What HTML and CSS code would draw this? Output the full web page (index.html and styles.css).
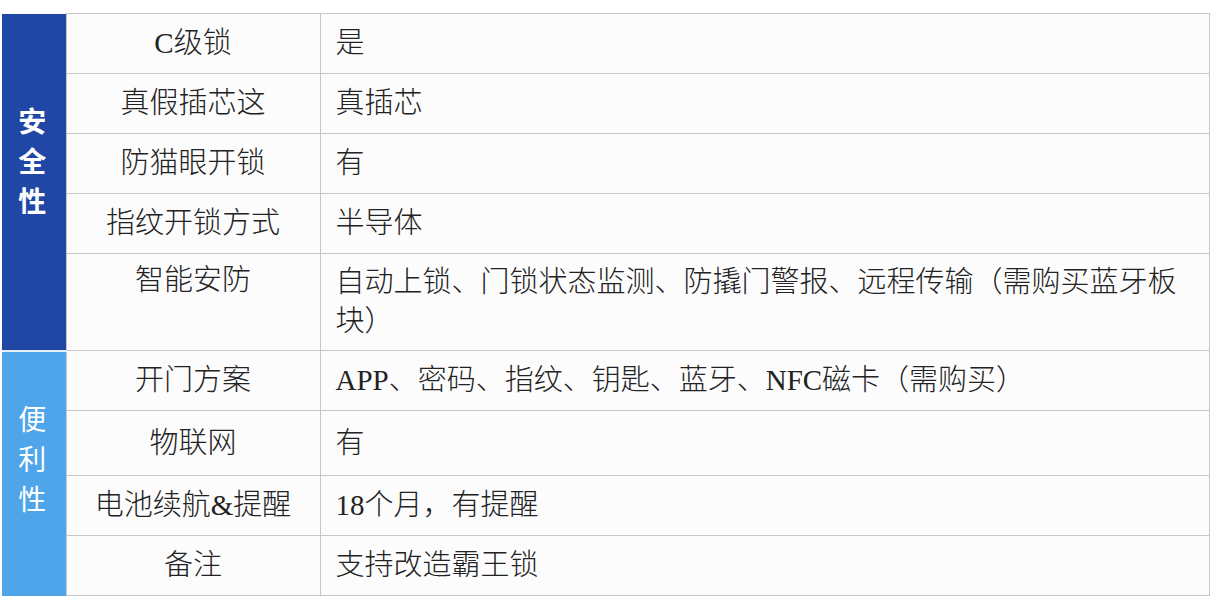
FILE: index.html
```html
<!DOCTYPE html>
<html lang="zh-CN">
<head>
<meta charset="utf-8">
<link rel="stylesheet" href="styles.css">
<title>智能锁参数</title>
</head>
<body>
<table class="spec">
  <colgroup>
    <col class="c-cat">
    <col class="c-label">
    <col class="c-value">
  </colgroup>
  <tbody>
    <tr class="row">
      <td class="cat cat-safe" rowspan="5"><span class="cat-text">安<br>全<br>性</span></td>
      <td class="label">C级锁</td>
      <td class="value">是</td>
    </tr>
    <tr class="row">
      <td class="label">真假插芯这</td>
      <td class="value">真插芯</td>
    </tr>
    <tr class="row">
      <td class="label">防猫眼开锁</td>
      <td class="value">有</td>
    </tr>
    <tr class="row">
      <td class="label">指纹开锁方式</td>
      <td class="value">半导体</td>
    </tr>
    <tr class="row row-tall">
      <td class="label label-top">智能安防</td>
      <td class="value">自动上锁、门锁状态监测、防撬门警报、远程传输（需购买蓝牙板块）</td>
    </tr>
    <tr class="row">
      <td class="cat cat-easy" rowspan="5"><span class="cat-text">便<br>利<br>性</span></td>
      <td class="label">开门方案</td>
      <td class="value">APP、密码、指纹、钥匙、蓝牙、NFC磁卡（需购买）</td>
    </tr>
    <tr class="row row-64">
      <td class="label">物联网</td>
      <td class="value">有</td>
    </tr>
    <tr class="row">
      <td class="label">电池续航&amp;提醒</td>
      <td class="value">18个月，有提醒</td>
    </tr>
    <tr class="row">
      <td class="label">备注</td>
      <td class="value">支持改造霸王锁</td>
    </tr>
  </tbody>
</table>
</body>
</html>
```

FILE: styles.css
```css
html, body {
  background: #ffffff;
}
body {
  margin: 13px 0 0 2px;
  font-family: "Liberation Serif", "Noto Sans CJK SC", serif;
  color: #222;
}
.spec {
  border-collapse: collapse;
  width: 1207px;
  table-layout: fixed;
  background: #fcfcfd;
}
.c-cat { width: 64px; }
.c-label { width: 254px; }
.c-value { width: 889px; }

.row { height: 60px; }
.row-tall { height: 97px; }
.row-64 { height: 65px; }

.spec td {
  border: 1px solid #c6c6c8;
  padding: 0;
  font-size: 29px;
  line-height: 39px;
  font-weight: 300;
}
.label {
  text-align: center;
  vertical-align: middle;
}
.label-top {
  vertical-align: top;
  padding-top: 7px !important;
}
.value {
  text-align: left;
  padding: 9px 16px 9px 15px !important;
  vertical-align: middle;
}
.spec td.cat {
  border: 0;
  color: #fff;
  text-align: center;
  font-family: "Noto Sans CJK SC", sans-serif;
  font-size: 28px;
  line-height: 40px;
  padding-right: 3px;
}
.spec td.cat-safe {
  background: #2047a5;
  font-weight: 700;
  vertical-align: top;
  padding-top: 86px;
  border-bottom: 2px solid #e6eef8;
}
.spec td.cat-easy {
  background: #4fa5ea;
  font-weight: 400;
  vertical-align: top;
  padding-top: 46px;
}
```
